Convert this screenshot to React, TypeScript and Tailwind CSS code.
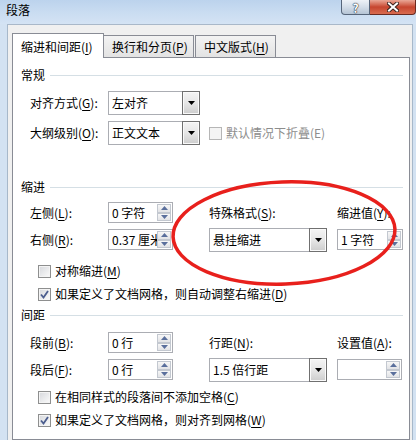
import React from 'react'

type AccProps = { pre: string; k?: string; post?: string }

// Label with an underlined access key, e.g. 对齐方式(G):
function Acc({ pre, k, post = '):' }: AccProps) {
  if (!k) return <span className="whitespace-nowrap">{pre}</span>
  return (
    <span className="whitespace-nowrap">
      {pre}(<u className="underline-offset-[2px]">{k}</u>
      {post}
    </span>
  )
}

function Section({ title, className }: { title: string; className: string }) {
  return (
    <div className={`flex h-[16px] items-center ${className}`}>
      <span>{title}</span>
      <span className="ml-[5px] h-px flex-1 bg-[#d5dfe5]" />
    </div>
  )
}

function Arrow() {
  return (
    <svg width="7" height="4" viewBox="0 0 7 4" aria-hidden="true">
      <path d="M0 0h7L3.5 4z" fill="#000" />
    </svg>
  )
}

function Combo({ value, width }: { value: string; width: string }) {
  return (
    <div className={`flex h-[24px] ${width} border border-[#abadb3] bg-white`}>
      <span className="flex flex-1 items-center overflow-hidden whitespace-nowrap pl-[3px]">{value}</span>
      <span className="-my-px -mr-px flex w-[18px] items-center justify-center border border-[#707070] bg-gradient-to-b from-[#f4f4f4] via-[#e6e6e6] to-[#cdcdcd] shadow-[inset_0_0_0_1px_#fafafa]">
        <Arrow />
      </span>
    </div>
  )
}

function SpinHalf({ up }: { up: boolean }) {
  return (
    <span className="flex flex-1 items-center justify-center border border-[#c3c8d0] bg-gradient-to-b from-[#f7f7f7] to-[#e2e3e6]">
      <svg width="7" height="4" viewBox="0 0 7 4" aria-hidden="true">
        <path d={up ? 'M0 4h7L3.5 0z' : 'M0 0h7L3.5 4z'} fill="#5a6f9c" />
      </svg>
    </span>
  )
}

function Spin({ value, width }: { value: string; width: string }) {
  return (
    <div className={`flex h-[21px] ${width} border border-[#abadb3] bg-white`}>
      <span className="flex flex-1 items-center overflow-hidden whitespace-nowrap pl-[3px]">{value}</span>
      <span className="my-px mr-px flex w-[14px] flex-col">
        <SpinHalf up />
        <SpinHalf up={false} />
      </span>
    </div>
  )
}

function Box({ checked, disabled }: { checked?: boolean; disabled?: boolean }) {
  return (
    <span
      className={`flex h-[13px] w-[13px] shrink-0 items-center justify-center border ${
        disabled ? 'border-[#b6b6b6] bg-[#f4f4f4]' : 'border-[#8e8f8f] bg-gradient-to-br from-[#d6d8dc] to-[#fbfbfb]'
      } shadow-[inset_0_0_0_1px_#f4f4f4]`}
    >
      {checked && (
        <svg width="9" height="9" viewBox="0 0 9 9" aria-hidden="true">
          <path d="M1 4.5l2.5 3L8 1" fill="none" stroke="#4b5d8e" strokeWidth="1.8" />
        </svg>
      )}
    </span>
  )
}

function CheckRow({ children, checked, className }: { children: React.ReactNode; checked?: boolean; className: string }) {
  return (
    <div className={`flex h-[16px] items-center gap-[4px] pl-[17px] ${className}`}>
      <Box checked={checked} />
      {children}
    </div>
  )
}

export default function App() {
  return (
    <div className="relative h-[440px] w-[416px] overflow-hidden bg-[#cddeef] font-['Noto_Sans_CJK_SC',sans-serif] text-[12px] leading-[16px] text-black">
      {/* Title bar */}
      <div className="flex h-[24px] items-start bg-gradient-to-b from-[#bcd3ed] via-[#c9dcf1] to-[#d4e3f4]">
        <span className="ml-[6px] mt-[2px]">段落</span>
        <div className="ml-auto flex h-[15px]">
          <div className="flex w-[29px] items-center justify-center rounded-bl-[4px] border border-t-0 border-[#56657a] bg-gradient-to-b from-[#eef2f7] via-[#d3dde8] to-[#b5c4d5]">
            <span className="text-[12px] font-bold leading-[13px] text-white [text-shadow:0_0_1px_#2b3440,0_0_1px_#2b3440,0_0_1px_#2b3440]">?</span>
          </div>
          <div className="flex w-[46px] items-center justify-center rounded-br-[4px] border border-l-0 border-t-0 border-[#6a2a20] bg-gradient-to-b from-[#e9a797] via-[#c6452f] to-[#d86b4f]">
            <svg width="12" height="10" viewBox="0 0 12 10" aria-hidden="true">
              <path d="M2 1.5l8 7M10 1.5l-8 7" stroke="#3b2420" strokeWidth="4" strokeLinecap="square" />
              <path d="M2 1.5l8 7M10 1.5l-8 7" stroke="#fff" strokeWidth="2" strokeLinecap="square" />
            </svg>
          </div>
        </div>
      </div>

      <div className="flex h-[416px]">
        <div className="w-[8px] border-r border-[#a7b8ca] bg-[#d3e2f2]" />
        <div className="flex flex-1 flex-col border-t border-[#a9b8c9] bg-[#f0f0f0] pl-[4px] pr-[2px] pt-[8px]">
          {/* Tabs */}
          <div className="relative z-10 flex h-[24px] items-end">
            <div className="-mb-px flex h-[25px] w-[92px] items-start border border-b-0 border-[#898c95] bg-white pl-[8px] pt-[5px]">
              <Acc pre="缩进和间距" k="I" post=")" />
            </div>
            <div className="flex h-[22px] w-[90px] items-start border border-b-0 border-l-0 border-[#898c95] bg-gradient-to-b from-[#f3f3f3] to-[#e3e3e3] pl-[8px] pt-[3px]">
              <Acc pre="换行和分页" k="P" post=")" />
            </div>
            <div className="ml-px flex h-[22px] w-[81px] items-start border border-b-0 border-[#898c95] bg-gradient-to-b from-[#f3f3f3] to-[#e3e3e3] pl-[8px] pt-[3px]">
              <Acc pre="中文版式" k="H" post=")" />
            </div>
          </div>

          {/* Panel */}
          <div className="flex-1 border border-[#898c95] bg-white pl-[8px] pr-[6px]">
            <Section title="常规" className="mt-[9px]" />

            <div className="mt-[8px] grid h-[24px] grid-cols-[78px_101px_128px_1fr] items-center pl-[9px]">
              <Acc pre="对齐方式" k="G" />
              <Combo value="左对齐" width="w-[92px]" />
            </div>

            <div className="mt-[6px] grid h-[24px] grid-cols-[78px_101px_128px_1fr] items-center pl-[9px]">
              <Acc pre="大纲级别" k="O" />
              <Combo value="正文文本" width="w-[92px]" />
              <div className="col-span-2 flex items-center gap-[4px] text-[#8d8d8d]">
                <Box disabled />
                <span>默认情况下折叠(E)</span>
              </div>
            </div>

            <Section title="缩进" className="mt-[34px]" />

            <div className="mt-[7px] grid h-[21px] grid-cols-[78px_101px_128px_1fr] items-center pl-[9px]">
              <Acc pre="左侧" k="L" />
              <Spin value="0 字符" width="w-[65px]" />
              <Acc pre="特殊格式" k="S" />
              <Acc pre="缩进值" k="Y" />
            </div>

            <div className="mt-[5px] grid h-[24px] grid-cols-[78px_101px_128px_1fr] items-start pl-[9px]">
              <span className="mt-[4px]">
                <Acc pre="右侧" k="R" />
              </span>
              <div className="mt-px">
                <Spin value="0.37 厘米" width="w-[65px]" />
              </div>
              <Combo value="悬挂缩进" width="w-[118px]" />
              <div className="mt-px">
                <Spin value="1 字符" width="w-[66px]" />
              </div>
            </div>

            <CheckRow className="mt-[11px]">
              <Acc pre="对称缩进" k="M" post=")" />
            </CheckRow>
            <CheckRow checked className="mt-[7px]">
              <Acc pre="如果定义了文档网格，则自动调整右缩进" k="D" post=")" />
            </CheckRow>

            <Section title="间距" className="mt-[5px]" />

            <div className="mt-[9px] grid h-[21px] grid-cols-[78px_101px_128px_1fr] items-center pl-[9px]">
              <Acc pre="段前" k="B" />
              <Spin value="0 行" width="w-[65px]" />
              <Acc pre="行距" k="N" />
              <Acc pre="设置值" k="A" />
            </div>

            <div className="mt-[5px] grid h-[24px] grid-cols-[78px_101px_128px_1fr] items-start pl-[9px]">
              <span className="mt-[4px]">
                <Acc pre="段后" k="F" />
              </span>
              <div className="mt-px">
                <Spin value="0 行" width="w-[65px]" />
              </div>
              <Combo value="1.5 倍行距" width="w-[118px]" />
              <div className="mt-px">
                <Spin value="" width="w-[65px]" />
              </div>
            </div>

            <CheckRow className="mt-[7px]">
              <Acc pre="在相同样式的段落间不添加空格" k="C" post=")" />
            </CheckRow>
            <CheckRow checked className="mt-[7px]">
              <Acc pre="如果定义了文档网格，则对齐到网格" k="W" post=")" />
            </CheckRow>
          </div>
        </div>
        <div className="w-[4px] border-l border-[#a7b8ca] bg-[#d3e2f2]" />
      </div>

      {/* Red highlight ellipse drawn over the dialog */}
      <svg className="pointer-events-none absolute left-0 top-0" width="416" height="440" aria-hidden="true">
        <ellipse cx="284" cy="233" rx="111" ry="51" transform="rotate(-2 284 233)" fill="none" stroke="#e8201c" strokeWidth="3.5" />
      </svg>
    </div>
  )
}
